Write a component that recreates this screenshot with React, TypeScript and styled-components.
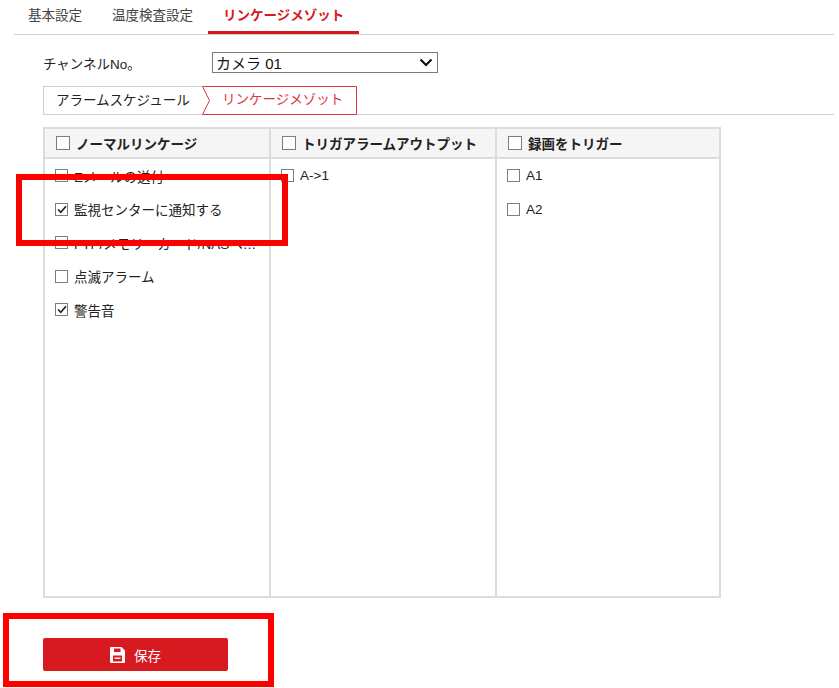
import React from "react";
import styled, { createGlobalStyle } from "styled-components";

const GlobalStyle = createGlobalStyle`
  body {
    margin: 0;
    background: #fff;
    font-family: "Liberation Sans", "Noto Sans CJK JP", sans-serif;
    color: #333;
  }
`;

const Page = styled.div`
  position: relative;
  width: 839px;
  height: 688px;
  padding: 0 5px 0 14px;
  box-sizing: border-box;
  overflow: hidden;
`;

const TabBar = styled.div`
  display: flex;
  height: 35px;
  box-sizing: border-box;
  border-bottom: 1px solid #cfcfcf;
`;

const Tab = styled.div<{ $active?: boolean }>`
  height: 34px;
  box-sizing: border-box;
  padding: 0 15px;
  line-height: 32px;
  font-size: 13.5px;
  color: ${(p) => (p.$active ? "#d7191f" : "#444")};
  font-weight: ${(p) => (p.$active ? "bold" : "normal")};
  border-bottom: 3px solid ${(p) => (p.$active ? "#d7191f" : "transparent")};
  &:first-child {
    padding-left: 14px;
  }
`;

const Content = styled.div`
  padding-left: 29px;
`;

const ChannelRow = styled.div`
  display: flex;
  align-items: center;
  margin-top: 17px;
  height: 21px;
`;

const Label = styled.div`
  width: 169px;
  font-size: 13.5px;
  color: #222;
`;

const SelectBox = styled.div`
  width: 226px;
  height: 21px;
  box-sizing: border-box;
  border: 1px solid #7a7a7a;
  display: flex;
  align-items: center;
  justify-content: space-between;
  padding: 0 4px 0 3px;
  font-size: 15px;
  color: #111;
`;

const SubTabBar = styled.div`
  display: flex;
  margin-top: 13px;
  height: 29px;
  box-sizing: border-box;
  border-bottom: 1px solid #cfcfcf;
`;

const SubTabGroup = styled.div`
  display: flex;
  height: 29px;
  border-left: 1px solid #cfcfcf;
  border-top: 1px solid #cfcfcf;
  box-sizing: border-box;
`;

const SubTab = styled.div`
  width: 158px;
  padding-left: 12px;
  box-sizing: border-box;
  white-space: nowrap;
  line-height: 27px;
  font-size: 13.5px;
  color: #222;
`;

const ActiveSubTab = styled.div`
  position: relative;
  width: 155px;
  height: 29px;
  margin-top: -1px;
  padding-left: 20px;
  box-sizing: border-box;
  white-space: nowrap;
  line-height: 28px;
  font-size: 13.5px;
  color: #d9363e;
  svg {
    position: absolute;
    left: 0;
    top: 0;
  }
  span {
    position: relative;
  }
`;

const Table = styled.div`
  margin-top: 12px;
  width: 678px;
  height: 471px;
  box-sizing: border-box;
  border: 2px solid #dcdcdc;
  display: grid;
  grid-template-columns: 224px 226px 1fr;
`;

const Column = styled.div`
  display: flex;
  flex-direction: column;
  min-width: 0;
  & + & {
    border-left: 2px solid #dcdcdc;
  }
`;

const Header = styled.div`
  height: 30px;
  box-sizing: border-box;
  background: #f5f5f5;
  border-bottom: 2px solid #dcdcdc;
  display: flex;
  align-items: center;
  padding-left: 11px;
  gap: 6px;
  font-size: 13.5px;
  font-weight: bold;
  color: #222;
`;

const Body = styled.div`
  padding-top: 0;
`;

const Row = styled.div`
  height: 33.5px;
  display: flex;
  align-items: center;
  padding: 0 10px;
  gap: 6px;
  font-size: 13.5px;
  color: #222;
  min-width: 0;
`;

const RowText = styled.span`
  white-space: nowrap;
  overflow: hidden;
  text-overflow: ellipsis;
  min-width: 0;
`;

const Box = styled.span<{ $size: number }>`
  flex: none;
  width: ${(p) => p.$size}px;
  height: ${(p) => p.$size}px;
  box-sizing: border-box;
  border: 1px solid #7d7d7d;
  background: #fff;
  display: flex;
  align-items: center;
  justify-content: center;
`;

const SaveButton = styled.button`
  margin-top: 40px;
  width: 185px;
  height: 33px;
  border: none;
  border-radius: 2px;
  background: #d71920;
  color: #fff;
  font-family: inherit;
  font-size: 13.5px;
  display: flex;
  align-items: center;
  justify-content: center;
  gap: 9px;
  padding: 0;
`;

const Annotation = styled.div<{ $x: number; $y: number; $w: number; $h: number }>`
  position: absolute;
  left: ${(p) => p.$x}px;
  top: ${(p) => p.$y}px;
  width: ${(p) => p.$w}px;
  height: ${(p) => p.$h}px;
  box-sizing: border-box;
  border: 6px solid #ff0000;
`;

function Check({ checked, size = 13 }: { checked?: boolean; size?: number }) {
  return (
    <Box $size={size}>
      {checked && (
        <svg width="10" height="9" viewBox="0 0 10 9">
          <path d="M1 4.5 L3.8 7.3 L9 1.3" fill="none" stroke="#222" strokeWidth="1.7" />
        </svg>
      )}
    </Box>
  );
}

function Floppy() {
  return (
    <svg width="15" height="16" viewBox="0 0 15 16">
      <path
        fillRule="evenodd"
        fill="#fff"
        d="M1 0 H11.5 L15 3.5 V15 A1 1 0 0 1 14 16 H1 A1 1 0 0 1 0 15 V1 A1 1 0 0 1 1 0 Z M4 1.5 V5 H10.5 V1.5 Z M3 8.5 V14.5 H12 V8.5 Z"
      />
      <rect x="4.5" y="10.5" width="6" height="1.4" fill="#fff" />
    </svg>
  );
}

const columns = [
  {
    title: "ノーマルリンケージ",
    items: [
      { label: "Eメールの送付" },
      { label: "監視センターに通知する", checked: true },
      { label: "FTP/メモリーカード/NASへアップロード" },
      { label: "点滅アラーム" },
      { label: "警告音", checked: true },
    ],
  },
  { title: "トリガアラームアウトプット", items: [{ label: "A->1" }] },
  { title: "録画をトリガー", items: [{ label: "A1" }, { label: "A2" }] },
];

export default function App() {
  return (
    <Page>
      <GlobalStyle />
      <TabBar>
        <Tab>基本設定</Tab>
        <Tab>温度検査設定</Tab>
        <Tab $active>リンケージメゾット</Tab>
      </TabBar>
      <Content>
        <ChannelRow>
          <Label>チャンネルNo。</Label>
          <SelectBox>
            <span>カメラ 01</span>
            <svg width="14" height="9" viewBox="0 0 14 9">
              <path d="M1.5 1.5 L7 7 L12.5 1.5" fill="none" stroke="#111" strokeWidth="2.2" />
            </svg>
          </SelectBox>
        </ChannelRow>
        <SubTabBar>
          <SubTabGroup>
            <SubTab>アラームスケジュール</SubTab>
            <ActiveSubTab>
              <svg width="155" height="29" viewBox="0 0 155 29">
                <path d="M0.5 0.5 H154.5 V28.5 H0.5 L7.5 14.5 Z" fill="#fff" stroke="#d9363e" strokeWidth="1" />
              </svg>
              <span>リンケージメゾット</span>
            </ActiveSubTab>
          </SubTabGroup>
        </SubTabBar>
        <Table>
          {columns.map((col) => (
            <Column key={col.title}>
              <Header>
                <Check size={14} />
                {col.title}
              </Header>
              <Body>
                {col.items.map((it) => (
                  <Row key={it.label}>
                    <Check checked={it.checked} />
                    <RowText>{it.label}</RowText>
                  </Row>
                ))}
              </Body>
            </Column>
          ))}
        </Table>
        <SaveButton>
          <Floppy />
          保存
        </SaveButton>
      </Content>
      <Annotation $x={16} $y={174} $w={272} $h={72} />
      <Annotation $x={3} $y={613} $w={271} $h={74} />
    </Page>
  );
}
